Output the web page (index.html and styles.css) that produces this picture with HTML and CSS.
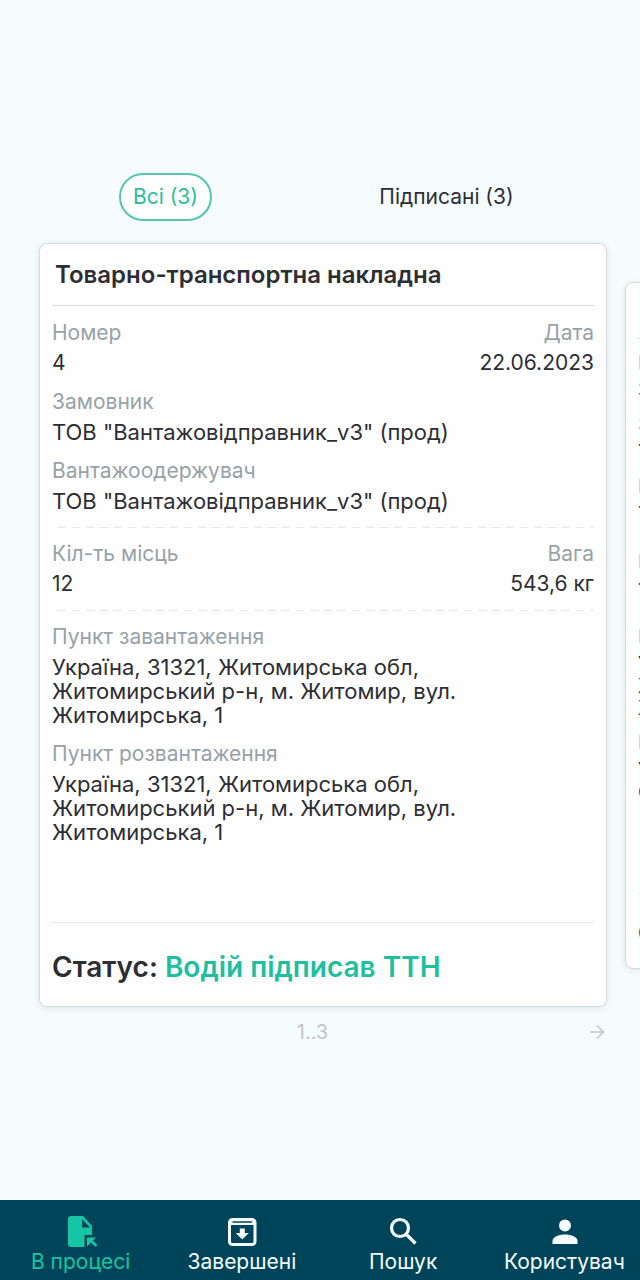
FILE: index.html
```html
<!DOCTYPE html>
<html lang="uk">
<head>
<meta charset="utf-8">
<meta name="viewport" content="width=device-width, initial-scale=1">
<title>Товарно-транспортні накладні</title>
<link rel="stylesheet" href="styles.css">
</head>
<body>
<div class="app">
  <main class="main">
    <div class="tabs">
      <button class="tab tab-active" type="button">Всі (3)</button>
      <button class="tab" type="button">Підписані (3)</button>
    </div>

    <div class="carousel">
      <article class="card">
        <h1 class="card-title">Товарно-транспортна накладна</h1>
        <div class="card-body">
          <dl class="fields">
            <div class="field"><dt>Номер</dt><dd>4</dd></div>
            <div class="field field-end"><dt>Дата</dt><dd>22.06.2023</dd></div>
            <div class="field field-wide"><dt>Замовник</dt><dd>ТОВ "Вантажовідправник_v3" (прод)</dd></div>
            <div class="field field-wide"><dt>Вантажоодержувач</dt><dd>ТОВ "Вантажовідправник_v3" (прод)</dd></div>
          </dl>
          <dl class="fields">
            <div class="field"><dt>Кіл-ть місць</dt><dd>12</dd></div>
            <div class="field field-end"><dt>Вага</dt><dd>543,6 кг</dd></div>
          </dl>
          <dl class="fields">
            <div class="field field-wide"><dt>Пункт завантаження</dt><dd class="address">Україна, 31321, Житомирська обл, Житомирський р-н, м. Житомир, вул. Житомирська, 1</dd></div>
            <div class="field field-wide"><dt>Пункт розвантаження</dt><dd class="address">Україна, 31321, Житомирська обл, Житомирський р-н, м. Житомир, вул. Житомирська, 1</dd></div>
          </dl>
        </div>
        <p class="card-status">Статус: <strong>Водій підписав ТТН</strong></p>
      </article>

      <article class="card card-next" aria-hidden="true">
        <h2 class="card-title"></h2>
        <div class="card-body">
          <dl class="fields">
            <div class="field field-wide"><dt>Номер</dt><dd>3</dd></div>
            <div class="field field-wide"><dt>Замовник</dt><dd>ТОВ</dd></div>
            <div class="field field-wide"><dt>Вантажоодержувач</dt><dd>ТОВ</dd></div>
          </dl>
          <dl class="fields">
            <div class="field"><dt>Кіл-ть місць</dt><dd>12</dd></div>
          </dl>
          <dl class="fields">
            <div class="field field-wide"><dt>Пункт завантаження</dt><dd class="address">Україна, 31321, Житомирська обл, Житомирський р-н, м. Житомир, вул. Житомирська, 1</dd></div>
            <div class="field field-wide"><dt>Пункт розвантаження</dt><dd class="address">Україна,<br>Одеса</dd></div>
          </dl>
        </div>
        <p class="card-status">Статус:</p>
      </article>
    </div>

    <div class="pager">
      <span class="pager-count">1..3</span>
      <button class="pager-next" type="button" aria-label="Наступна">
        <svg width="16" height="16" viewBox="0 0 16 16" fill="none" stroke="currentColor" stroke-width="1.500"><path d="M1 8h13M8 1.500l6.500 6.500L8 14.500"/></svg>
      </button>
    </div>
  </main>

  <nav class="nav">
    <div class="nav-items">
      <a class="nav-item nav-item-active" href="#progress">
        <svg width="32" height="32" viewBox="0 0 32 32" fill="currentColor"><path fill-rule="evenodd" d="M6 0h12l9 10v9h-7.500v12H6a3 3 0 0 1-3-3V3a3 3 0 0 1 3-3zM17 3v8.500h8z"/><path d="M22 21.500h9l-3 3 4.500 4.500-2 2-4.500-4.500-4 4z"/></svg>
        <span>В процесі</span>
      </a>
      <a class="nav-item" href="#done">
        <svg width="32" height="32" viewBox="0 0 32 32" fill="none" stroke="currentColor" stroke-width="3"><rect x="3.500" y="3.500" width="25.500" height="25" rx="3"/><path d="M4 6.500h24.500" stroke-width="5"/><path d="M6.500 6h19.500" stroke="#004459" stroke-width="1.500"/><path d="M13.800 12.500h5V17h4l-6.500 6.500L9.800 17h4z" fill="currentColor" stroke="none"/></svg>
        <span>Завершені</span>
      </a>
      <a class="nav-item" href="#search">
        <svg width="32" height="32" viewBox="0 0 32 32" fill="none" stroke="currentColor" stroke-width="3.200"><circle cx="13" cy="12" r="8.500"/><path d="M19 18l9.500 9.500"/></svg>
        <span>Пошук</span>
      </a>
      <a class="nav-item" href="#user">
        <svg width="32" height="32" viewBox="0 0 32 32" fill="currentColor"><circle cx="17" cy="9.500" r="6"/><path d="M4.500 28v-3c0-4 6-6.500 12.500-6.500S29.500 21 29.500 25v3z"/></svg>
        <span>Користувач</span>
      </a>
    </div>
  </nav>
</div>
</body>
</html>
```
FILE: styles.css
```css
* {
  box-sizing: border-box;
}

body {
  margin: 0;
  background: #f5fcfd;
  color: #2d2e34;
  font-family: Inter, "Noto Sans", sans-serif;
  font-size: 21px;
  line-height: 24px;
}

h1, h2, p, dl, dd {
  margin: 0;
}

button {
  border: 0;
  background: none;
  color: inherit;
  font: inherit;
}

.app {
  display: flex;
  flex-direction: column;
  min-height: 100vh;
  overflow: hidden;
}

.main {
  flex: 1;
  padding-top: 173px;
}

.tabs {
  display: grid;
  grid-template-columns: 1fr 1fr;
  justify-items: center;
  padding: 0 53px 0 25px;
}

.tab {
  height: 48px;
  padding: 0 12px 0 12px;
  border: 2px solid transparent;
  border-radius: 24px;
}

.tab-active {
  border-color: #55c5b0;
  background: #fff;
  color: #2bbd9f;
}

.carousel {
  display: flex;
  align-items: center;
  gap: 18px;
  margin-top: 22px;
  padding: 0 33px 0 39px;
}

.card {
  display: flex;
  flex: 0 0 100%;
  flex-direction: column;
  padding: 0 12px;
  border: 1px solid #d6dadc;
  border-radius: 8px;
  background: #fffefe;
  box-shadow: 0 1px 6px rgba(40, 60, 70, 0.12);
}

.card-title {
  padding: 19px 3px 18px;
  border-bottom: 1px solid #dcdcde;
  font-size: 24px;
  font-weight: 600;
  line-height: 24px;
}

.card-body {
  padding: 15px 0 78px;
}

.fields {
  display: grid;
  grid-template-columns: auto auto;
  gap: 15px;
}

.fields + .fields {
  margin-top: 14px;
  padding-top: 15px;
  background: repeating-linear-gradient(90deg, transparent 0 6px, #e6e8ea 6px 14px) top / 100% 1px no-repeat;
}

.field {
  display: grid;
  gap: 6px;
}

.field-end {
  text-align: right;
}

.field-wide {
  grid-column: 1 / -1;
}

.field-wide dd {
  font-size: 22px;
}

dt {
  color: #97a2a7;
}

.address {
  max-width: 480px;
}

.card-status {
  padding: 28px 0 23px;
  border-top: 1px solid #e9e9eb;
  font-size: 28px;
  font-weight: 600;
  line-height: 32px;
}

.card-status strong {
  color: #1dbf9f;
  font-weight: 600;
}

.card-next {
  flex-basis: 90%;
  font-size: 18px;
  line-height: 22px;
}

.card-next .card-title {
  height: 56px;
  padding: 0;
}

.card-next .card-body {
  padding: 13px 0 68px;
}

.card-next .fields {
  gap: 13px;
}

.card-next .fields + .fields {
  margin-top: 13px;
  padding-top: 13px;
}

.card-next .field {
  gap: 5px;
}

.card-next dd {
  font-size: 20px;
}

.card-next .address {
  max-width: 432px;
  min-height: 66px;
}

.card-next .card-status {
  padding: 25px 0 20px;
  font-size: 25px;
  line-height: 29px;
}

.pager {
  display: grid;
  grid-template-columns: 1fr auto 1fr;
  align-items: center;
  margin: 11px 33px 12px 18px;
  color: #c1c6c8;
  font-size: 20px;
}

.pager-count {
  grid-column: 2;
  padding: 2px 0;
}

.pager-next {
  display: flex;
  justify-self: end;
  padding: 2px;
}

.nav {
  background: #004459;
  color: #f4fcff;
}

.nav-items {
  display: grid;
  grid-template-columns: repeat(4, 1fr);
  margin-right: -5px;
  padding: 16px 0 6px;
}

.nav-item {
  display: grid;
  justify-items: center;
  gap: 2px;
  color: inherit;
  text-decoration: none;
}

.nav-item-active {
  color: #16c5a3;
}
```
